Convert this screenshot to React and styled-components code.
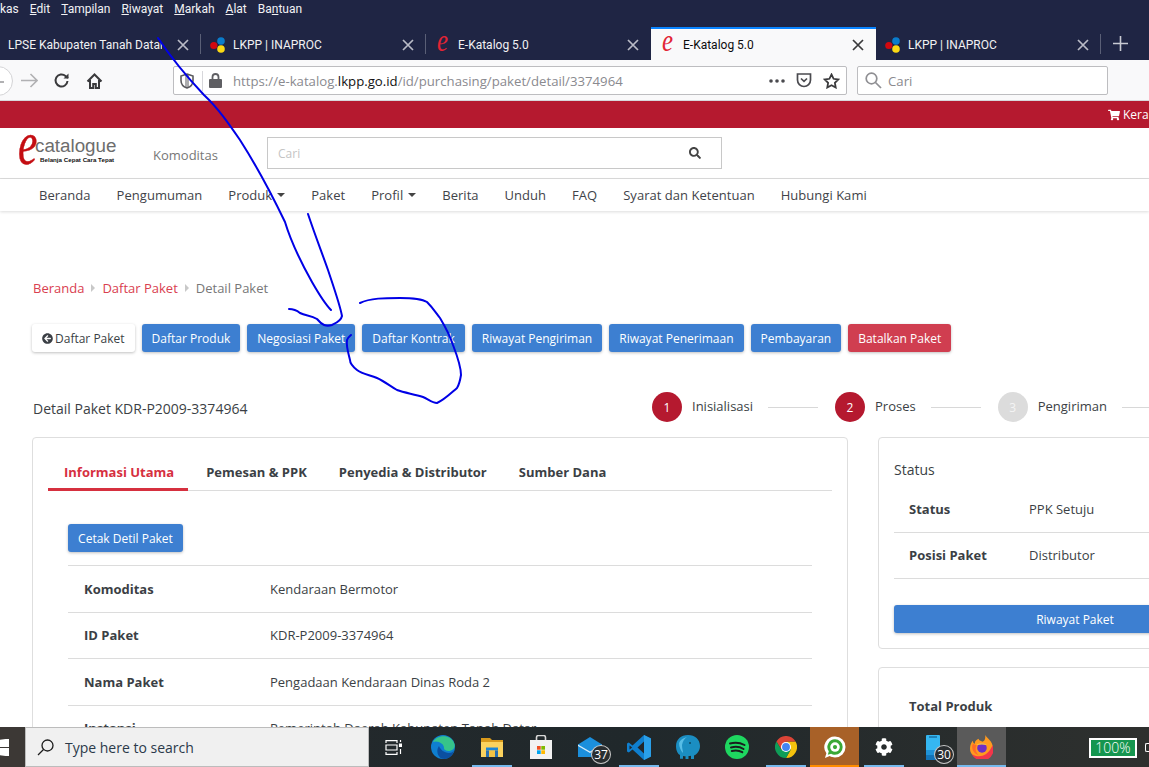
import React from "react";
import styled, { createGlobalStyle } from "styled-components";
import { FaShoppingCart, FaSearch, FaCog, FaArrowCircleLeft } from "react-icons/fa";

const GlobalStyle = createGlobalStyle`
  html, body {
    margin: 0;
    padding: 0;
    overflow: hidden;
    background: #fff;
  }
  * { box-sizing: border-box; }
`;

const Screen = styled.div`
  position: relative;
  width: 1149px;
  height: 767px;
  overflow: hidden;
  display: flex;
  flex-direction: column;
  font-family: "Open Sans", "Noto Sans", sans-serif;
  color: #3b3f45;
`;

/* browser chrome */
const MenuBar = styled.div`
  height: 27px;
  flex: none;
  background: #1f2544;
  color: #f2f2f4;
  display: flex;
  align-items: flex-start;
  padding-top: 1px;
  font-family: Roboto, "Open Sans", sans-serif;
  font-size: 12px;
  line-height: 16px;
  gap: 11px;
`;
const TabStrip = styled.div`
  height: 33px;
  flex: none;
  background: #1f2544;
  display: flex;
  margin-left: -24px;
`;
const Tab = styled.div`
  position: relative;
  width: 225px;
  flex: none;
  display: flex;
  align-items: center;
  padding-left: ${(p) => p.$textLeft}px;
  font-family: Roboto, "Open Sans", sans-serif;
  font-size: 12px;
  color: ${(p) => (p.$active ? "#0c0c0d" : "#f1f1f3")};
  background: ${(p) => (p.$active ? "#f9f9fa" : "transparent")};
  border-top: 2px solid ${(p) => (p.$active ? "#0a84ff" : "transparent")};
  &::after {
    content: "";
    display: ${(p) => (p.$sep ? "block" : "none")};
    position: absolute;
    right: 0;
    top: 5px;
    bottom: 6px;
    width: 1px;
    background: #5a5f76;
  }
`;
const TabLabel = styled.span`
  flex: none;
  width: 165px;
  margin-left: ${(p) => p.$gap}px;
  padding-right: ${(p) => p.$clip || 0}px;
  white-space: nowrap;
  overflow: hidden;
`;
const ClippedText = styled.span`
  display: block;
  overflow: hidden;
`;
const TabClose = styled.span`
  flex: none;
  width: 20px;
  display: flex;
  justify-content: center;
  color: ${(p) => (p.$active ? "#3a3a3c" : "#b9bbc6")};
`;
const EGlyph = styled.span`
  font-family: "Liberation Serif", serif;
  font-style: italic;
  font-size: 31px;
  line-height: 20px;
  width: 14px;
  margin-top: -7px;
  color: #e22434;
  transform: scaleX(0.8);
  transform-origin: left center;
`;
const NewTab = styled.div`
  flex: none;
  margin-left: 1px;
  width: 36px;
  display: flex;
  align-items: center;
  justify-content: center;
  color: #c8cad3;
`;
const Toolbar = styled.div`
  height: 41px;
  flex: none;
  background: #f9f9fa;
  border-bottom: 1px solid #d7d7db;
  display: flex;
  align-items: flex-start;
  padding-top: 6px;
`;
const NavIcons = styled.div`
  width: 173px;
  flex: none;
  height: 29px;
  display: flex;
  align-items: center;
`;
const NavIconSlot = styled.div`
  width: ${(p) => p.$w}px;
  flex: none;
  display: flex;
  justify-content: center;
`;
const BackCircle = styled.div`
  position: relative;
  width: 30px;
  height: 30px;
  margin-left: -17px;
  margin-right: 5px;
  flex: none;
  border: 1px solid #d4d4d6;
  border-radius: 50%;
  background: #fff;
  &::after {
    content: "";
    position: absolute;
    right: 8px;
    top: 14px;
    width: 6px;
    height: 2px;
    background: #b1b1b3;
  }
`;
const UrlBar = styled.div`
  width: 674px;
  height: 29px;
  flex: none;
  background: #fff;
  border: 1px solid #bdbdc0;
  border-radius: 2px;
  display: flex;
  align-items: center;
  font-size: 13.2px;
  color: #8a8a8f;
  padding-left: 6px;
`;
const UrlDivider = styled.span`
  width: 1px;
  height: 20px;
  background: #d7d7db;
  margin: 0 6px 0 8px;
`;
const UrlText = styled.span`
  margin-left: 11px;
  flex: 1;
  white-space: nowrap;
`;
const UrlHost = styled.span`
  color: #111;
`;
const UrlActions = styled.div`
  display: flex;
  align-items: center;
  gap: 11px;
  padding-right: 6px;
  color: #4a4a4f;
`;
const BrowserSearch = styled.div`
  width: 251px;
  height: 29px;
  margin-left: 10px;
  flex: none;
  background: #fff;
  border: 1px solid #bdbdc0;
  border-radius: 2px;
  display: flex;
  align-items: center;
  gap: 6px;
  padding-left: 7px;
  font-size: 13.2px;
  color: #8a8a8f;
`;

/* page */
const Viewport = styled.div`
  flex: 1;
  min-height: 0;
  overflow: hidden;
  font-size: 13px;
`;
const RedBar = styled.div`
  height: 27px;
  background: #b5192f;
  color: #fff;
  display: flex;
  align-items: center;
  gap: 3px;
  padding-left: 1108px;
  white-space: nowrap;
  font-size: 12px;
`;
const CartIcon = styled(FaShoppingCart)`
  flex: none;
  font-size: 12px;
`;
const SiteHeader = styled.div`
  height: 51px;
  border-bottom: 1px solid #ddd;
  display: flex;
  align-items: flex-start;
`;
const Logo = styled.div`
  width: 136px;
  margin-left: 18px;
  height: 50px;
  flex: none;
  display: flex;
  padding-top: 8px;
`;
const LogoE = styled.span`
  font-family: "Liberation Serif", serif;
  font-style: italic;
  font-size: 62px;
  line-height: 24px;
  width: 17px;
  height: 24px;
  margin-top: -5px;
  color: #c40d12;
  -webkit-text-stroke: 0.5px #c40d12;
  transform: scaleX(0.7);
  transform-origin: left center;
`;
const LogoText = styled.div`
  display: flex;
  flex-direction: column;
`;
const LogoWord = styled.span`
  font-family: "Liberation Sans", sans-serif;
  font-size: 18.8px;
  line-height: 20px;
  color: #6d6d6d;
`;
const LogoTag = styled.span`
  font-family: "Liberation Sans", sans-serif;
  font-size: 6.2px;
  font-weight: 700;
  line-height: 8px;
  margin: 0 0 0 5px;
  color: #111;
  white-space: nowrap;
`;
const Komoditas = styled.span`
  width: 114px;
  flex: none;
  padding-top: 18px;
  margin-left: -1px;
  color: #777;
  font-size: 13px;
`;
const SearchBox = styled.div`
  width: 455px;
  height: 32px;
  margin-top: 9px;
  flex: none;
  border: 1px solid #c8c8c8;
  display: flex;
  align-items: center;
  justify-content: space-between;
  padding: 0 20px 0 10px;
  color: #c4c4c4;
  font-size: 12px;
`;
const SearchIcon = styled(FaSearch)`
  color: #444;
  font-size: 12px;
`;
const MainNav = styled.div`
  height: 32px;
  display: flex;
  align-items: center;
  gap: 26px;
  padding-left: 39px;
  box-shadow: 0 1px 3px rgba(0, 0, 0, 0.14);
  letter-spacing: 0.03px;
`;
const NavItem = styled.span`
  display: flex;
  align-items: center;
  gap: 5px;
  color: #3f4349;
`;
const Caret = styled.i`
  width: 0;
  height: 0;
  border-left: 4px solid transparent;
  border-right: 4px solid transparent;
  border-top: 4px solid #444;
`;
const Content = styled.div`
  padding: 68px 0 0 32px;
  width: 1300px;
`;
const Breadcrumb = styled.div`
  display: flex;
  align-items: center;
  height: 18px;
  gap: 7px;
  margin-left: 1px;
`;
const Crumb = styled.span`
  color: ${(p) => (p.$link ? "#d9404f" : "#777")};
`;
const CrumbArrow = styled.i`
  width: 0;
  height: 0;
  border-top: 4px solid transparent;
  border-bottom: 4px solid transparent;
  border-left: 4px solid #c8c8c8;
`;
const ActionRow = styled.div`
  display: flex;
  gap: 7px;
  margin-top: 27px;
`;
const Button = styled.div`
  height: 28px;
  padding: 0 10px;
  display: flex;
  align-items: center;
  justify-content: center;
  gap: 2px;
  flex: none;
  border-radius: 3px;
  font-size: 12px;
  white-space: nowrap;
  background: ${(p) => (p.$tone === "light" ? "#fff" : p.$tone === "danger" ? "#d03e50" : "#3d7fd1")};
  color: ${(p) => (p.$tone === "light" ? "#3b3f45" : "#fff")};
  box-shadow: 0 1px 3px rgba(0, 0, 0, 0.25);
`;
const WideButton = styled(Button)`
  width: 100%;
`;
const TitleRow = styled.div`
  display: flex;
  align-items: center;
  margin-top: 40px;
  height: 30px;
`;
const PageTitle = styled.div`
  width: 620px;
  flex: none;
  font-size: 14px;
  padding-left: 1px;
  padding-top: 2px;
`;
const Step = styled.div`
  display: flex;
  align-items: center;
  flex: none;
  margin-right: 17px;
`;
const StepDot = styled.span`
  width: 30px;
  height: 30px;
  border-radius: 50%;
  background: ${(p) => (p.$done ? "#b5192f" : "#dcdcdc")};
  color: ${(p) => (p.$done ? "#fff" : "#f4f4f4")};
  display: flex;
  align-items: center;
  justify-content: center;
  font-size: 12px;
  margin-right: 10px;
`;
const StepLabel = styled.span`
  font-size: 13px;
  padding-bottom: 2px;
`;
const StepLine = styled.span`
  width: 50px;
  height: 1px;
  background: #d8d8d8;
  margin-left: 15px;
`;
const Columns = styled.div`
  display: grid;
  grid-template-columns: 816px 394px;
  column-gap: 30px;
  align-items: start;
  margin-top: 15px;
`;
const Card = styled.div`
  border: 1px solid #dedede;
  border-radius: 4px;
  background: #fff;
`;
const SideStack = styled.div`
  display: flex;
  flex-direction: column;
  gap: 18px;
`;
const MainCard = styled(Card)`
  padding: 15px 15px 0;
`;
const TabsRow = styled.div`
  display: flex;
  height: 38px;
  border-bottom: 1px solid #dcdcdc;
`;
const InfoTab = styled.span`
  height: 38px;
  padding: 10px ${(p) => (p.$active ? "14px" : "16px")} 0 16px;
  margin-right: ${(p) => (p.$active ? "2px" : "0")};
  font-weight: 700;
  font-size: 13px;
  color: ${(p) => (p.$active ? "#d6303f" : "#3b3f45")};
  border-bottom: ${(p) => (p.$active ? "3px solid #d6303f" : "none")};
`;
const CardBody = styled.div`
  padding: 33px 20px 0;
`;
const PrintButton = styled(Button)`
  width: 115px;
`;
const InfoTable = styled.div`
  margin-top: 13px;
  border-top: 1px solid #dcdcdc;
`;
const InfoRow = styled.div`
  height: 46.5px;
  display: grid;
  grid-template-columns: ${(p) => p.$label}px 1fr;
  align-items: center;
  padding-left: ${(p) => p.$inset}px;
  border-bottom: ${(p) => (p.$plain ? "none" : "1px solid #dcdcdc")};
`;
const RowLabel = styled.span`
  font-weight: 700;
`;
const SideCard = styled(Card)`
  padding: 22px 15px 15px;
`;
const SideHeading = styled.div`
  font-size: 14px;
  line-height: 19px;
  height: 26px;
`;
const SideAction = styled.div`
  margin-top: 26px;
`;
const TotalCard = styled(Card)`
  padding: 15px 15px 0;
  height: 120px;
`;

/* taskbar */
const Taskbar = styled.div`
  height: 40px;
  flex: none;
  background: linear-gradient(90deg, #262a2d, #20282b 55%, #2e302e);
  display: flex;
  align-items: stretch;
  color: #fff;
`;
const StartButton = styled.div`
  width: 25px;
  flex: none;
  background: #3c3835;
  display: flex;
  align-items: center;
`;
const TaskSearch = styled.div`
  width: 344px;
  flex: none;
  background: #f0f0f0;
  border: 1px solid #bcbcbc;
  display: flex;
  align-items: center;
  gap: 11px;
  padding-left: 11px;
  color: #2b3a4a;
  font-size: 14px;
`;
const TaskSlot = styled.div`
  position: relative;
  width: 49px;
  flex: none;
  display: flex;
  align-items: center;
  justify-content: center;
  background: ${(p) => p.$bg || "transparent"};
  &::after {
    content: "";
    display: ${(p) => (p.$bar ? "block" : "none")};
    position: absolute;
    left: ${(p) => (p.$wide ? "0" : "5px")};
    right: ${(p) => (p.$wide ? "0" : "4px")};
    bottom: 0;
    height: 2px;
    background: ${(p) => p.$bar};
  }
`;
const TaskBadge = styled.span`
  position: absolute;
  right: 3px;
  bottom: 3px;
  width: 20px;
  height: 19px;
  border-radius: 50%;
  border: 1px solid #c9c9c9;
  background: #2a2e30;
  font-size: 12px;
  line-height: 17px;
  text-align: center;
  color: #fff;
`;
const Battery = styled.div`
  margin-left: 83px;
  margin-top: 11px;
  width: 48px;
  height: 20px;
  flex: none;
  border: 2px solid #fff;
  background: #15964f;
  color: #fff;
  font-size: 14px;
  font-weight: 300;
  line-height: 16px;
  text-align: center;
`;
const BatteryNub = styled.span`
  width: 4px;
  height: 9px;
  margin: 16px 0 0 8px;
  flex: none;
  border: 1.5px solid #fff;
  border-right: none;
  border-radius: 2px 0 0 2px;
`;
const Ink = styled.svg`
  position: absolute;
  left: 0;
  top: 0;
  pointer-events: none;
`;

const Dots = () => (
  <svg width="16" height="16" viewBox="0 0 16 16">
    <circle cx="3.8" cy="8.5" r="3.6" fill="#d2080f" />
    <circle cx="11" cy="4" r="3.8" fill="#0a7ccb" />
    <circle cx="11" cy="12" r="3.8" fill="#fbd914" />
  </svg>
);
const X = () => (
  <svg width="12" height="12" viewBox="0 0 12 12" stroke="currentColor" strokeWidth="1.7" fill="none">
    <path d="M1 1l10 10M11 1L1 11" />
  </svg>
);

const TABS = [
  { label: "LPSE Kabupaten Tanah Datar:", left: 32, gap: 0, sep: true, clip: 11 },
  { label: "LKPP | INAPROC", icon: "dots", left: 9, gap: 7, sep: true },
  { label: "E-Katalog 5.0", icon: "e", left: 11, gap: 7, sep: false },
  { label: "E-Katalog 5.0", icon: "e", left: 11, gap: 7, active: true },
  { label: "LKPP | INAPROC", icon: "dots", left: 9, gap: 7, sep: true },
];
const NAV = [
  ["Beranda"], ["Pengumuman"], ["Produk", true], ["Paket"], ["Profil", true], ["Berita"],
  ["Unduh"], ["FAQ"], ["Syarat dan Ketentuan"], ["Hubungi Kami"],
];
const ACTIONS = [
  "Daftar Produk", "Negosiasi Paket", "Daftar Kontrak", "Riwayat Pengiriman", "Riwayat Penerimaan", "Pembayaran",
];
const STEPS = [
  { n: 1, label: "Inisialisasi", done: true },
  { n: 2, label: "Proses", done: true },
  { n: 3, label: "Pengiriman" },
];
const INFO = [
  ["Komoditas", "Kendaraan Bermotor"],
  ["ID Paket", "KDR-P2009-3374964"],
  ["Nama Paket", "Pengadaan Kendaraan Dinas Roda 2"],
  ["Instansi", "Pemerintah Daerah Kabupaten Tanah Datar"],
];

const App = () => (
  <Screen>
    <GlobalStyle />
    <MenuBar>
      <span>kas</span>
      <span><u>E</u>dit</span>
      <span><u>T</u>ampilan</span>
      <span><u>R</u>iwayat</span>
      <span><u>M</u>arkah</span>
      <span><u>A</u>lat</span>
      <span>Ba<u>n</u>tuan</span>
    </MenuBar>
    <TabStrip>
      {TABS.map((t, i) => (
        <Tab key={i} $active={t.active} $sep={t.sep} $textLeft={t.left}>
          {t.icon === "dots" && <Dots />}
          {t.icon === "e" && <EGlyph>e</EGlyph>}
          <TabLabel $gap={t.gap} $clip={t.clip}>
            <ClippedText>{t.label}</ClippedText>
          </TabLabel>
          <TabClose $active={t.active}><X /></TabClose>
        </Tab>
      ))}
      <NewTab>
        <svg width="15" height="15" viewBox="0 0 15 15" stroke="currentColor" strokeWidth="1.6">
          <path d="M7.5 0v15M0 7.5h15" />
        </svg>
      </NewTab>
    </TabStrip>
    <Toolbar>
      <NavIcons>
        <BackCircle />
        <NavIconSlot $w={23}>
          <svg width="17" height="15" viewBox="0 0 17 15" fill="none" stroke="#b1b1b3" strokeWidth="1.6">
            <path d="M0 7.500h15.500M9.500 1l6.500 6.500-6.500 6.500" />
          </svg>
        </NavIconSlot>
        <NavIconSlot $w={41}>
          <svg width="17" height="17" viewBox="0 0 17 17" fill="none" stroke="#3a3a3c" strokeWidth="2">
            <path d="M14.500 9a6 6 0 1 1-2-5l2.500 2" />
            <path d="M15.500 1.500v5h-5" fill="#3a3a3c" stroke="none" />
          </svg>
        </NavIconSlot>
        <NavIconSlot $w={25}>
          <svg width="17" height="16" viewBox="0 0 17 16" fill="none" stroke="#3a3a3c" strokeWidth="2">
            <path d="M1.500 8.500l7-7 7 7M4 7v8h3.200v-4h2.600v4H13V7" />
          </svg>
        </NavIconSlot>
      </NavIcons>
      <UrlBar>
        <svg width="14" height="16" viewBox="0 0 14 16" fill="none" stroke="#5a5a5e" strokeWidth="1.6">
          <path d="M7 1l6 2v4.500c0 4-3 6.500-6 7.500-3-1-6-3.500-6-7.500V3z" />
          <path d="M7 1v14" strokeWidth="4" opacity=".5" />
        </svg>
        <UrlDivider />
        <svg width="13" height="15" viewBox="0 0 13 15" fill="#5f5f63">
          <path d="M1 6h11a1 1 0 0 1 1 1v7a1 1 0 0 1-1 1H1a1 1 0 0 1-1-1V7a1 1 0 0 1 1-1z" />
          <path d="M3.500 6V4a3 3 0 0 1 6 0v2" fill="none" stroke="#5f5f63" strokeWidth="1.800" />
        </svg>
        <UrlText>
          https://e-katalog.<UrlHost>lkpp.go.id</UrlHost>/id/purchasing/paket/detail/3374964
        </UrlText>
        <UrlActions>
          <svg width="16" height="4" viewBox="0 0 16 4" fill="#4a4a4f">
            <circle cx="2" cy="2" r="1.800" /><circle cx="8" cy="2" r="1.800" /><circle cx="14" cy="2" r="1.800" />
          </svg>
          <svg width="16" height="15" viewBox="0 0 16 15" fill="none" stroke="#4a4a4f" strokeWidth="1.700">
            <path d="M1.500 1h13v6a6.500 6.500 0 0 1-13 0z" />
            <path d="M5 5.500l3 2.800 3-2.800" />
          </svg>
          <svg width="17" height="16" viewBox="0 0 17 16" fill="none" stroke="#3a3a3c" strokeWidth="1.800">
            <path d="M8.500 1.500l2.100 4.300 4.700.7-3.400 3.300.8 4.700-4.200-2.200-4.200 2.200.8-4.700L1.700 6.500l4.700-.7z" />
          </svg>
        </UrlActions>
      </UrlBar>
      <BrowserSearch>
        <svg width="17" height="17" viewBox="0 0 17 17" fill="none" stroke="#8f8f93" strokeWidth="1.700">
          <circle cx="6.500" cy="6.500" r="5.300" />
          <path d="M10.500 10.500l5.500 5.500" />
        </svg>
        Cari
      </BrowserSearch>
    </Toolbar>

    <Viewport>
      <RedBar>
        <CartIcon />
        Keranjang
      </RedBar>
      <SiteHeader>
        <Logo>
          <LogoE>e</LogoE>
          <LogoText>
            <LogoWord>catalogue</LogoWord>
            <LogoTag>Belanja Cepat Cara Tepat</LogoTag>
          </LogoText>
        </Logo>
        <Komoditas>Komoditas</Komoditas>
        <SearchBox>
          Cari
          <SearchIcon />
        </SearchBox>
      </SiteHeader>
      <MainNav>
        {NAV.map(([label, caret]) => (
          <NavItem key={label}>
            {label}
            {caret && <Caret />}
          </NavItem>
        ))}
      </MainNav>
      <Content>
        <Breadcrumb>
          <Crumb $link>Beranda</Crumb>
          <CrumbArrow />
          <Crumb $link>Daftar Paket</Crumb>
          <CrumbArrow />
          <Crumb>Detail Paket</Crumb>
        </Breadcrumb>
        <ActionRow>
          <Button $tone="light">
            <FaArrowCircleLeft size={11} />
            Daftar Paket
          </Button>
          {ACTIONS.map((a) => (
            <Button key={a}>{a}</Button>
          ))}
          <Button $tone="danger">Batalkan Paket</Button>
        </ActionRow>
        <TitleRow>
          <PageTitle>Detail Paket KDR-P2009-3374964</PageTitle>
          {STEPS.map((s) => (
            <Step key={s.n}>
              <StepDot $done={s.done}>{s.n}</StepDot>
              <StepLabel>{s.label}</StepLabel>
              <StepLine />
            </Step>
          ))}
        </TitleRow>
        <Columns>
          <MainCard>
            <TabsRow>
              <InfoTab $active>Informasi Utama</InfoTab>
              <InfoTab>Pemesan &amp; PPK</InfoTab>
              <InfoTab>Penyedia &amp; Distributor</InfoTab>
              <InfoTab>Sumber Dana</InfoTab>
            </TabsRow>
            <CardBody>
              <PrintButton>Cetak Detil Paket</PrintButton>
              <InfoTable>
                {INFO.map(([k, v]) => (
                  <InfoRow key={k} $label={186} $inset={16}>
                    <RowLabel>{k}</RowLabel>
                    <span>{v}</span>
                  </InfoRow>
                ))}
              </InfoTable>
            </CardBody>
          </MainCard>
          <SideStack>
            <SideCard>
              <SideHeading>Status</SideHeading>
              <InfoRow $label={120} $inset={15}>
                <RowLabel>Status</RowLabel>
                <span>PPK Setuju</span>
              </InfoRow>
              <InfoRow $label={120} $inset={15}>
                <RowLabel>Posisi Paket</RowLabel>
                <span>Distributor</span>
              </InfoRow>
              <SideAction>
                <WideButton>Riwayat Paket</WideButton>
              </SideAction>
            </SideCard>
            <TotalCard>
              <InfoRow $label={120} $inset={15} $plain>
                <RowLabel>Total Produk</RowLabel>
              </InfoRow>
            </TotalCard>
          </SideStack>
        </Columns>
      </Content>
    </Viewport>

    <Taskbar>
      <StartButton>
        <svg width="9" height="17" viewBox="0 0 9 17" fill="#fff">
          <path d="M0 0.800l9-1.300V8H0zM0 9h9v8.500l-9-1.300z" />
        </svg>
      </StartButton>
      <TaskSearch>
        <svg width="17" height="17" viewBox="0 0 17 17" fill="none" stroke="#1c1c1c" strokeWidth="1.300">
          <circle cx="10.500" cy="6.500" r="5.500" />
          <path d="M6.500 10.500L1 16" />
        </svg>
        Type here to search
      </TaskSearch>
      <TaskSlot>
        <svg width="17" height="15" viewBox="0 0 17 15" fill="none" stroke="#fff" strokeWidth="1.200">
          <path d="M1 3V.6h11V3M1 12v2.400h11V12M1 5h11v5H1z" />
          <path d="M14.500 4h2v2.500h-2z" fill="#fff" />
          <path d="M15.500 0v2M15.500 9v5" />
        </svg>
      </TaskSlot>
      <TaskSlot>
        <svg width="24" height="24" viewBox="0 0 24 24">
          <circle cx="12" cy="12" r="12" fill="#0f7fd0" />
          <path d="M2 7C5 0 20-2 23.500 9c1 4-2 7-6 7-3 0-5-1.500-4.500-3.500C13 9 7 5 2 7z" fill="#36c48a" />
          <path d="M11.500 23.800C6 22 5 15 8 11c1 3 5 7 10 7 2 0 4-.8 5-2.500-1.500 6-6 9-11.500 8.300z" fill="#0b4fa0" />
        </svg>
      </TaskSlot>
      <TaskSlot $bar="#76b9ed">
        <svg width="22" height="19" viewBox="0 0 22 19">
          <path d="M0 0h9l2 2h11v17H0z" fill="#d99a1c" />
          <path d="M0 4h22v15H0z" fill="#fbd25e" />
          <path d="M5 9.500h12v3H5z" fill="#1c86d6" />
          <path d="M8 12.500h6V19H8z" fill="#f4c344" />
          <path d="M5 12.500h3V19H5zM14 12.500h3V19h-3z" fill="#2a6fb0" />
        </svg>
      </TaskSlot>
      <TaskSlot>
        <svg width="22" height="24" viewBox="0 0 22 24">
          <path d="M6.500 6V2.500a2 2 0 0 1 2-2h5a2 2 0 0 1 2 2V6" fill="none" stroke="#d7d7d7" strokeWidth="1.600" />
          <path d="M0 5h22v19H0z" fill="#f2f2f2" />
          <path d="M7 11h3.700v3.700H7z" fill="#f05022" />
          <path d="M11.300 11H15v3.700h-3.700z" fill="#7fba00" />
          <path d="M7 15.300h3.700V19H7z" fill="#00a4ef" />
          <path d="M11.300 15.300H15V19h-3.700z" fill="#ffb900" />
        </svg>
      </TaskSlot>
      <TaskSlot>
        <svg width="24" height="20" viewBox="0 0 24 20">
          <path d="M0 7.500L12 0l12 7.500V20H0z" fill="#1b8fdc" />
          <path d="M0 7.500l12 7 12-7v1.500l-12 7L0 9z" fill="#d6edfa" />
        </svg>
        <TaskBadge>37</TaskBadge>
      </TaskSlot>
      <TaskSlot $bar="#76b9ed">
        <svg width="24" height="25" viewBox="0 0 24 25">
          <path d="M17 0l7 3.500v18L17 25 5.500 14.500 1.800 17.500 0 16.500v-8l1.800-1 3.700 3z" fill="#0f7fcf" />
          <path d="M17 6.500l-6.500 6 6.500 6z" fill="#22262a" />
          <path d="M2.500 10.500l2.700 2-2.700 2z" fill="#22262a" />
          <path d="M17 0l7 3.500v18L17 25z" fill="#2a9fe8" />
        </svg>
      </TaskSlot>
      <TaskSlot>
        <svg width="24" height="24" viewBox="0 0 24 24">
          <path d="M12 0C5 0 0 4.500 0 11c0 5 2 8 4 9v3.800h3V21c1 .3 1.500.3 2.500.3v2.700h3v-3c1 0 2 0 2.500-.2V24h3v-3.500c3-1 6-5 6-9.500C24 4.500 19 0 12 0z" fill="#1b8ec2" />
          <path d="M3 8c1-3 4-5 8-6-3 2-4 4-5 8 0 3 1 6 1 8-2-2-4-6-4-10z" fill="#57bde6" />
          <circle cx="14" cy="8" r="1" fill="#0c4a66" />
        </svg>
      </TaskSlot>
      <TaskSlot>
        <svg width="24" height="24" viewBox="0 0 24 24" fill="none">
          <circle cx="12" cy="12" r="12" fill="#1ed760" />
          <path d="M5 8.500c5-1.500 10-1 14.500 1.500M6 12.500c4-1 9-.7 12.500 1.500M6.800 16c3.500-.8 7.500-.5 10.500 1.200" stroke="#1a1d1e" strokeWidth="2" strokeLinecap="round" />
        </svg>
      </TaskSlot>
      <TaskSlot $bar="#76b9ed">
        <svg width="22" height="22" viewBox="0 0 24 24" fill="none">
          <path d="M22.400 6A12 12 0 0 1 12 24l5-9-5-9z" fill="#f4c20d" />
          <path d="M1.600 6A12 12 0 0 1 22.400 6H12L7 15z" fill="#db4437" />
          <path d="M1.600 6A12 12 0 0 0 12 24l5-9H7z" fill="#0f9d58" />
          <circle cx="12" cy="12" r="5.500" fill="#fff" />
          <circle cx="12" cy="12" r="4.300" fill="#4285f4" />
        </svg>
      </TaskSlot>
      <TaskSlot $bg="#a86128" $bar="#ff8c00" $wide>
        <svg width="22" height="23" viewBox="0 0 23 24" fill="none">
          <path d="M11.500 0.500a11 11 0 0 1 0 22c-2 0-4-.5-5.500-1.500L1 23l1.500-5A11 11 0 0 1 11.500.5z" fill="#fff" />
          <path d="M11.500 3.500a8 8 0 0 1 0 16c-1.500 0-3-.4-4-1L4 19.500l1-3.500a8 8 0 0 1 6.500-12.500z" fill="#3aa835" />
          <circle cx="11.500" cy="11.500" r="5" fill="#fff" />
          <circle cx="11.500" cy="11.500" r="2.200" fill="#3aa835" />
        </svg>
      </TaskSlot>
      <TaskSlot $bar="#76b9ed">
        <FaCog size={18} />
      </TaskSlot>
      <TaskSlot>
        <svg width="14" height="25" viewBox="0 0 14 25">
          <path d="M0 1a1 1 0 0 1 1-1h12a1 1 0 0 1 1 1v23a1 1 0 0 1-1 1H1a1 1 0 0 1-1-1z" fill="#35b7f1" />
          <path d="M0 15h14v5H0z" fill="#1f93d8" />
          <path d="M0 20h14v5H0z" fill="#1374b8" />
          <path d="M3 1.500h8v1H3z" fill="#0b4f80" />
        </svg>
        <TaskBadge>30</TaskBadge>
      </TaskSlot>
      <TaskSlot $bg="#5a5a5a" $bar="#76b9ed" $wide>
        <svg width="23" height="24" viewBox="0 0 24 25">
          <path d="M16 0c1 3 8 6 8 14a12 11 0 0 1-24 0C0 10 2 7 3 6c0 2 1 3 2 3 0-3 2-4 4-5 0 2 2 2 4 3 3-1 3-4 3-7z" fill="#ff9a1f" />
          <path d="M23.500 11A11.500 11 0 0 1 2 20c5 3 15 5 21.500-9z" fill="#f3364a" />
          <path d="M3 9c-2 4 0 10 6 12-3-3-4-7-2-10z" fill="#ff6a2a" />
          <circle cx="12.500" cy="13.500" r="5" fill="#6d2ec6" />
          <path d="M6.500 10.500c3-2.500 9-2.500 11 0-3-.8-7-.8-11 0z" fill="#ffcf3a" />
        </svg>
      </TaskSlot>
      <Battery>100%</Battery>
      <BatteryNub />
    </Taskbar>

    {/* pen annotations drawn on top of the screenshot */}
    <Ink width="1149" height="767" viewBox="0 0 1149 767" fill="none" stroke="#0000e6" strokeWidth="2" strokeLinecap="round" strokeLinejoin="round">
      <path d="M158 38C170 56 188 78 204 95C218 108 229 124 240 140C256 165 272 195 285 222C292 245 303 266 312 282C320 296 326 305 331 310" />
      <path d="M308 214C315 235 322 253 328 270C334 288 340 305 342 316C341 321 336 323 332 325C326 327 322 325 317 319C311 315 306 316 300 313C295 309 292 309 289 309" />
      <path d="M360 303C370 298 385 298 400 298C412 298 422 299 427 302C433 308 436 313 440 318C446 328 450 336 453 345C458 358 461 367 461 375C460 381 459 385 457 388C450 394 444 400 437 403C432 403 428 399 423 397C414 394 405 393 397 390C390 386 384 381 377 378C370 375 362 374 357 370C352 366 350 363 350 360C348 352 346 346 347 340C348 337 350 336 351 335" />
    </Ink>
  </Screen>
);

export default App;
